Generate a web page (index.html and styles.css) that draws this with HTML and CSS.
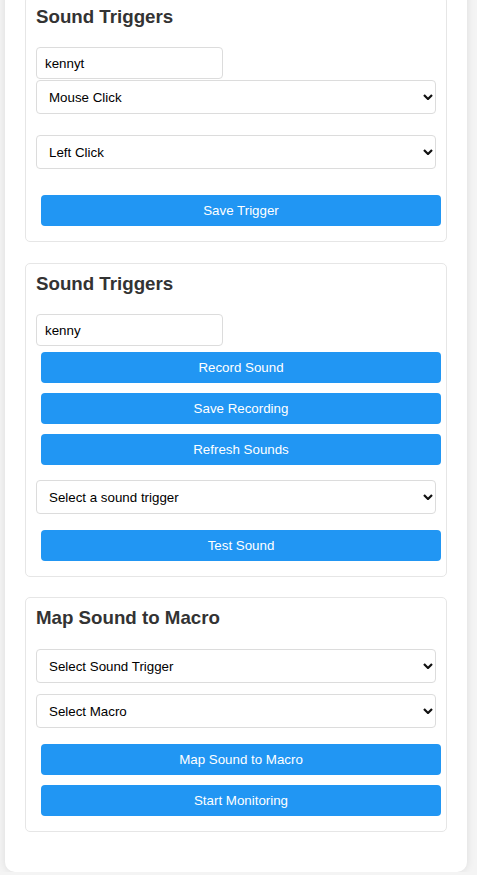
FILE: index.html
```html
<!DOCTYPE html>
<html lang="en">
<head>
<meta charset="utf-8">
<title>Sound Triggers</title>
<link rel="stylesheet" href="styles.css">
</head>
<body>
<div class="container">
  <section class="card card-trigger">
    <h3 class="card-title">Sound Triggers</h3>
    <input class="text-input" type="text" value="kennyt">
    <div class="select-wrap sel-first">
      <select class="select"><option>Mouse Click</option></select>
      <svg class="chev" viewBox="0 0 10 6" width="10" height="6"><path d="M1 1l4 4 4-4" fill="none" stroke="#111" stroke-width="2.2"/></svg>
    </div>
    <div class="select-wrap sel-second">
      <select class="select"><option>Left Click</option></select>
      <svg class="chev" viewBox="0 0 10 6" width="10" height="6"><path d="M1 1l4 4 4-4" fill="none" stroke="#111" stroke-width="2.2"/></svg>
    </div>
    <button class="btn btn-after-select-lg">Save Trigger</button>
  </section>

  <section class="card">
    <h3 class="card-title">Sound Triggers</h3>
    <input class="text-input" type="text" value="kenny">
    <button class="btn btn-after-input">Record Sound</button>
    <button class="btn btn-next">Save Recording</button>
    <button class="btn btn-next">Refresh Sounds</button>
    <div class="select-wrap sel-after-btn">
      <select class="select"><option>Select a sound trigger</option></select>
      <svg class="chev" viewBox="0 0 10 6" width="10" height="6"><path d="M1 1l4 4 4-4" fill="none" stroke="#111" stroke-width="2.2"/></svg>
    </div>
    <button class="btn btn-after-select">Test Sound</button>
  </section>

  <section class="card card-map">
    <h3 class="card-title title-map">Map Sound to Macro</h3>
    <div class="select-wrap">
      <select class="select"><option>Select Sound Trigger</option></select>
      <svg class="chev" viewBox="0 0 10 6" width="10" height="6"><path d="M1 1l4 4 4-4" fill="none" stroke="#111" stroke-width="2.2"/></svg>
    </div>
    <div class="select-wrap sel-stack">
      <select class="select"><option>Select Macro</option></select>
      <svg class="chev" viewBox="0 0 10 6" width="10" height="6"><path d="M1 1l4 4 4-4" fill="none" stroke="#111" stroke-width="2.2"/></svg>
    </div>
    <button class="btn btn-after-select">Map Sound to Macro</button>
    <button class="btn btn-next">Start Monitoring</button>
  </section>
</div>
</body>
</html>
```

FILE: styles.css
```css
* { box-sizing: border-box; }

html, body {
  margin: 0;
  padding: 0;
}

body {
  background: #f4f4f4;
  font-family: "Liberation Sans", Arial, sans-serif;
  color: #333;
  padding: 0 10px 0 5px;
  overflow: hidden;
}

.container {
  width: 462px;
  margin-top: -24px;
  background: #fff;
  border-radius: 10px;
  box-shadow: 0 0 8px rgba(0, 0, 0, 0.1);
  padding: 20px 20px 40px;
}

.card {
  display: flex;
  flex-direction: column;
  align-items: flex-start;
  width: 422px;
  border: 1px solid #e6e6e6;
  border-radius: 5px;
  padding: 9px 10px 15px;
  margin-top: 21px;
}

.card-trigger { margin-top: 0; }
.card-map { margin-top: 20px; }

.card-title {
  margin: 0 0 20px;
  font-size: 18.72px;
  line-height: 21px;
  font-weight: bold;
  color: #333;
}

.title-map { margin-bottom: 21px; }

.text-input {
  width: 187px;
  height: 32px;
  border: 1px solid #dcdcdc;
  border-radius: 4px;
  padding: 0 8px;
  font-family: "Liberation Sans", Arial, sans-serif;
  font-size: 13.333px;
  color: #000;
  outline: none;
  background: #fff;
}

.select-wrap {
  position: relative;
  width: 400px;
}

.select {
  display: block;
  width: 400px;
  height: 34px;
  border: 1px solid #dcdcdc;
  border-radius: 4px;
  padding: 0 12px;
  font-family: "Liberation Sans", Arial, sans-serif;
  font-size: 13.333px;
  color: #000;
  background: #fff;
  -webkit-appearance: none;
  appearance: none;
  outline: none;
}

.chev {
  position: absolute;
  right: 3px;
  top: 14px;
  pointer-events: none;
}

.sel-first { margin-top: 1px; }
.sel-second { margin-top: 21px; }
.sel-after-btn { margin-top: 15px; }
.sel-stack { margin-top: 11px; }

.btn {
  width: 400px;
  height: 31px;
  margin-left: 5px;
  border: none;
  border-radius: 4px;
  background: #2196f3;
  color: #fff;
  font-family: "Liberation Sans", Arial, sans-serif;
  font-size: 13.333px;
  padding: 0;
  cursor: pointer;
}

.btn-after-input { margin-top: 6px; }
.btn-next { margin-top: 10px; }
.btn-after-select { margin-top: 16px; }
.btn-after-select-lg { margin-top: 26px; }
```
